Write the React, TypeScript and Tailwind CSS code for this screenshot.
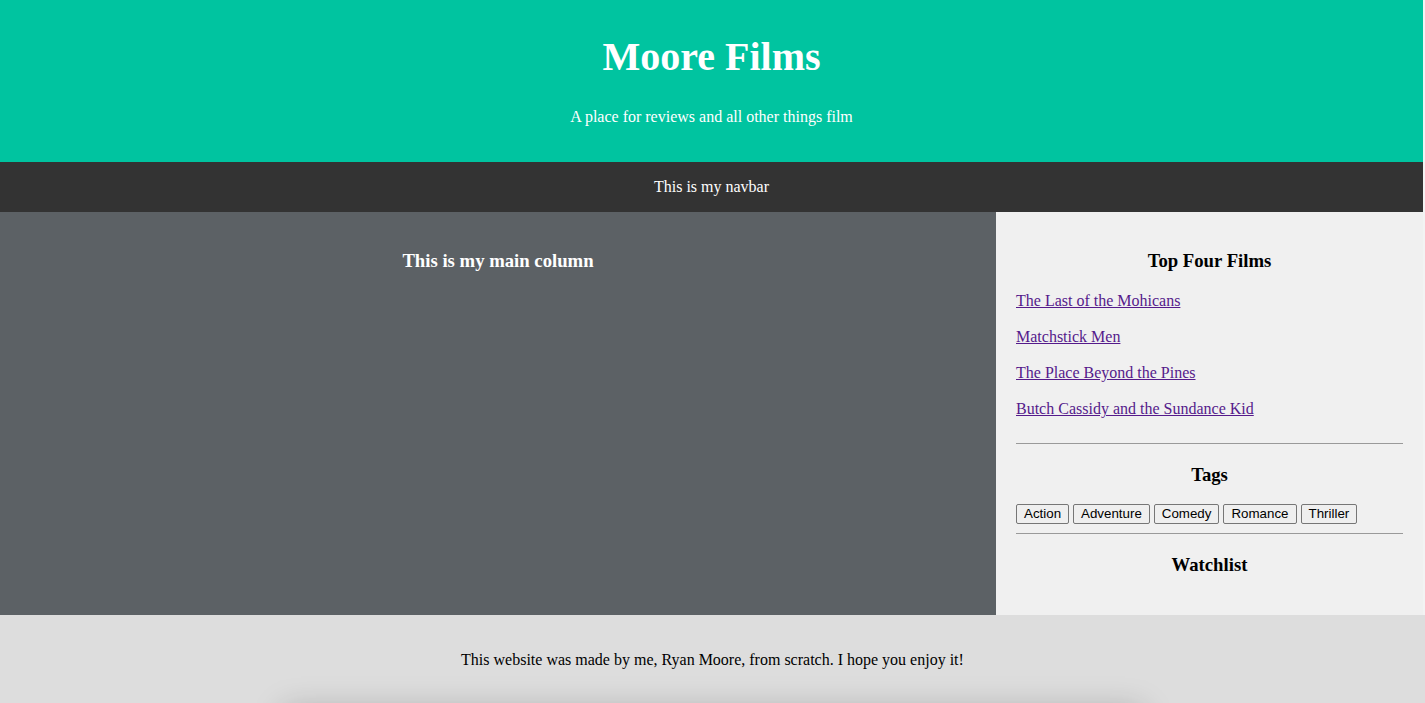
const films = [
  "The Last of the Mohicans",
  "Matchstick Men",
  "The Place Beyond the Pines",
  "Butch Cassidy and the Sundance Kid",
];

const tags = ["Action", "Adventure", "Comedy", "Romance", "Thriller"];

export default function App() {
  return (
    <div className="min-h-screen bg-[#f3f3f3] font-['Liberation_Serif',serif] text-base text-black">
      <div className="w-[1423px]">
        <header className="bg-[#00c4a0] pt-[34px] pb-[36px] text-center text-white">
          <h1 className="text-[40px] font-bold leading-[46px]">Moore Films</h1>
          <p className="mt-[28px] leading-[18px]">A place for reviews and all other things film</p>
        </header>
        <nav className="flex h-[50px] items-center justify-center bg-[#333333] text-white">
          This is my navbar
        </nav>
        <div className="flex">
          <main className="w-[996px] bg-[#5c6165] pt-[38px] text-center text-white">
            <h3 className="text-[18.72px] font-bold leading-[22px]">This is my main column</h3>
          </main>
          <aside className="flex h-[403px] w-[427px] flex-col bg-[#f0f0f0] px-[20px] pt-[38px]">
            <h3 className="text-center text-[18.72px] font-bold leading-[22px]">Top Four Films</h3>
            <ul className="mt-[20px] flex flex-col gap-[18px]">
              {films.map((f) => (
                <li key={f} className="leading-[18px]">
                  <a href="#" className="text-[#551a8b] underline">
                    {f}
                  </a>
                </li>
              ))}
            </ul>
            <hr className="mt-[25px] border-t border-[#9a9a9a]" />
            <h3 className="mt-[20px] text-center text-[18.72px] font-bold leading-[22px]">Tags</h3>
            <div className="mt-[18px] flex gap-[4px]">
              {tags.map((t) => (
                <button
                  key={t}
                  className="h-[20px] rounded-[2px] border border-[#767676] bg-[#efefef] px-[7px] font-['Liberation_Sans',sans-serif] text-[13.33px] leading-[16px]"
                >
                  {t}
                </button>
              ))}
            </div>
            <hr className="mt-[9px] border-t border-[#9a9a9a]" />
            <h3 className="mt-[20px] text-center text-[18.72px] font-bold leading-[22px]">Watchlist</h3>
          </aside>
        </div>
      </div>
      <footer className="bg-[#dddddd] pt-[36px] text-center">
        <p className="leading-[18px]">This website was made by me, Ryan Moore, from scratch. I hope you enjoy it!</p>
        <div className="mx-auto mt-[40px] h-[200px] w-[860px] bg-[#dddddd] shadow-[0_0_30px_rgba(0,0,0,0.22)]" />
      </footer>
    </div>
  );
}
